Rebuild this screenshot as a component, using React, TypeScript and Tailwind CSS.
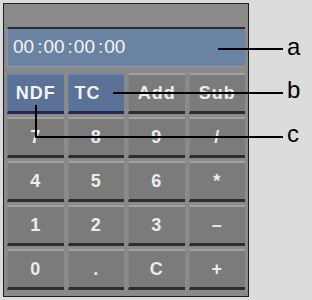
import React from "react";

type Key = { label: string; blue?: boolean; left?: boolean };

const keys: Key[] = [
  { label: "NDF", blue: true },
  { label: "TC", blue: true, left: true },
  { label: "Add" },
  { label: "Sub" },
  { label: "7" },
  { label: "8" },
  { label: "9" },
  { label: "/" },
  { label: "4" },
  { label: "5" },
  { label: "6" },
  { label: "*" },
  { label: "1" },
  { label: "2" },
  { label: "3" },
  { label: "–" },
  { label: "0" },
  { label: "." },
  { label: "C" },
  { label: "+" },
];

const CalcKey: React.FC<{ k: Key }> = ({ k }) => {
  const base = k.blue
    ? "bg-[#5a7298] border-t-[#7087a9] border-b-[#25255a] border-l-[#647ca0] text-[#f4f4f4]"
    : "bg-[#7b7b7b] border-t-[#a2a2a2] border-b-[#2e2e2e] border-l-[#858585] text-[#ececec]";
  return (
    <div
      className={`h-[41px] flex items-center border-t-2 border-b-[3px] border-l text-[18px] font-bold tracking-[1px] ${base} ${
        k.left ? "justify-start pl-[6px]" : "justify-center"
      }`}
    >
      {k.label}
    </div>
  );
};

export default function App() {
  return (
    <div
      className="relative w-[312px] h-[300px] bg-[#dcdcdc] pt-[3px] pl-[3px]"
      style={{ fontFamily: '"Liberation Sans", Arial, sans-serif' }}
    >
      <div className="w-[246px] h-[294px] border border-[#1e1e1e] bg-[#8a8a8a] px-[3px] pt-[23px] flex flex-col">
        <div className="h-[40px] flex items-center border-t-2 border-t-[#2b2b2b] border-b border-b-[#8d9db2] border-l border-l-[#8193ab] bg-[#6b83a2] pl-[5px] text-[19px] text-[#f4f4f4]">
          00<span className="ml-[3px] mr-[1px]">:</span>00
          <span className="ml-[3px] mr-[1px]">:</span>00
          <span className="ml-[3px] mr-[1px]">:</span>00
        </div>
        <div className="mt-[6px] grid grid-cols-4 gap-x-[4px] gap-y-[3px]">
          {keys.map((k) => (
            <CalcKey key={k.label} k={k} />
          ))}
        </div>
      </div>

      {/* callouts */}
      <svg className="absolute left-0 top-0" width="312" height="300">
        <line x1="218" y1="49" x2="283" y2="49" stroke="#000" strokeWidth="2" />
        <line x1="113" y1="93" x2="283" y2="93" stroke="#000" strokeWidth="2" />
        <polyline points="36,105 36,137 283,137" fill="none" stroke="#000" strokeWidth="2" />
      </svg>
      <span className="absolute left-[287px] top-[35px] text-[24px] leading-[24px] text-black">a</span>
      <span className="absolute left-[287px] top-[78px] text-[24px] leading-[24px] text-black">b</span>
      <span className="absolute left-[287px] top-[122px] text-[24px] leading-[24px] text-black">c</span>
    </div>
  );
}
